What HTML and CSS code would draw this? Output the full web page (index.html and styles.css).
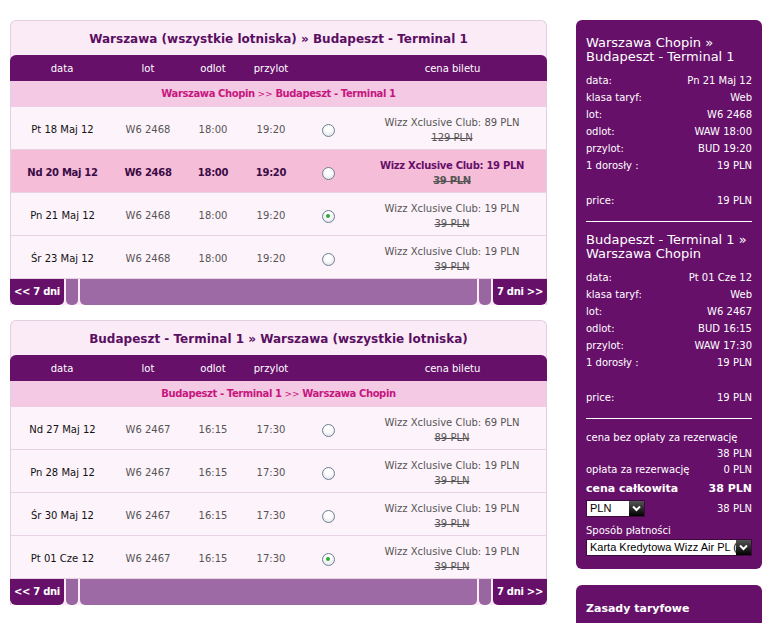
FILE: index.html
```html
<!DOCTYPE html>
<html lang="pl">
<head>
    <meta charset="UTF-8">
    <title>Wybór lotu</title>
    <link rel="stylesheet" href="styles.css">
</head>
<body>
<div class="page">
    <div class="main">
        <div class="flight-box">
            <h2 class="flight-title">Warszawa (wszystkie lotniska) &raquo; Budapeszt - Terminal 1</h2>
            <table class="flights">
                <thead>
                    <tr>
                        <th class="c-date">data</th>
                        <th class="c-lot">lot</th>
                        <th class="c-dep">odlot</th>
                        <th class="c-arr">przylot</th>
                        <th class="c-radio"></th>
                        <th class="c-price">cena biletu</th>
                    </tr>
                </thead>
                <tbody>
                    <tr class="route">
                        <td colspan="6"><b>Warszawa Chopin</b> <span class="arrows">&gt;&gt;</span> <b>Budapeszt - Terminal 1</b></td>
                    </tr>
                    <tr>
                        <td class="date">Pt 18 Maj 12</td>
                        <td>W6 2468</td>
                        <td>18:00</td>
                        <td>19:20</td>
                        <td><span class="radio"></span></td>
                        <td class="price">Wizz Xclusive Club: 89 PLN<br><s>129 PLN</s></td>
                    </tr>
                    <tr class="selected-day">
                        <td class="date">Nd 20 Maj 12</td>
                        <td>W6 2468</td>
                        <td>18:00</td>
                        <td>19:20</td>
                        <td><span class="radio"></span></td>
                        <td class="price">Wizz Xclusive Club: 19 PLN<br><s>39 PLN</s></td>
                    </tr>
                    <tr>
                        <td class="date">Pn 21 Maj 12</td>
                        <td>W6 2468</td>
                        <td>18:00</td>
                        <td>19:20</td>
                        <td><span class="radio checked"></span></td>
                        <td class="price">Wizz Xclusive Club: 19 PLN<br><s>39 PLN</s></td>
                    </tr>
                    <tr>
                        <td class="date">Śr 23 Maj 12</td>
                        <td>W6 2468</td>
                        <td>18:00</td>
                        <td>19:20</td>
                        <td><span class="radio"></span></td>
                        <td class="price">Wizz Xclusive Club: 19 PLN<br><s>39 PLN</s></td>
                    </tr>
                </tbody>
            </table>
            <div class="pager">
                <a class="pager-btn prev">&lt;&lt; 7 dni</a>
                <span class="pager-tab"></span>
                <span class="pager-fill"></span>
                <span class="pager-tab"></span>
                <a class="pager-btn next">7 dni &gt;&gt;</a>
            </div>
        </div>

        <div class="flight-box">
            <h2 class="flight-title">Budapeszt - Terminal 1 &raquo; Warszawa (wszystkie lotniska)</h2>
            <table class="flights">
                <thead>
                    <tr>
                        <th class="c-date">data</th>
                        <th class="c-lot">lot</th>
                        <th class="c-dep">odlot</th>
                        <th class="c-arr">przylot</th>
                        <th class="c-radio"></th>
                        <th class="c-price">cena biletu</th>
                    </tr>
                </thead>
                <tbody>
                    <tr class="route">
                        <td colspan="6"><b>Budapeszt - Terminal 1</b> <span class="arrows">&gt;&gt;</span> <b>Warszawa Chopin</b></td>
                    </tr>
                    <tr>
                        <td class="date">Nd 27 Maj 12</td>
                        <td>W6 2467</td>
                        <td>16:15</td>
                        <td>17:30</td>
                        <td><span class="radio"></span></td>
                        <td class="price">Wizz Xclusive Club: 69 PLN<br><s>89 PLN</s></td>
                    </tr>
                    <tr>
                        <td class="date">Pn 28 Maj 12</td>
                        <td>W6 2467</td>
                        <td>16:15</td>
                        <td>17:30</td>
                        <td><span class="radio"></span></td>
                        <td class="price">Wizz Xclusive Club: 19 PLN<br><s>39 PLN</s></td>
                    </tr>
                    <tr>
                        <td class="date">Śr 30 Maj 12</td>
                        <td>W6 2467</td>
                        <td>16:15</td>
                        <td>17:30</td>
                        <td><span class="radio"></span></td>
                        <td class="price">Wizz Xclusive Club: 19 PLN<br><s>39 PLN</s></td>
                    </tr>
                    <tr>
                        <td class="date">Pt 01 Cze 12</td>
                        <td>W6 2467</td>
                        <td>16:15</td>
                        <td>17:30</td>
                        <td><span class="radio checked"></span></td>
                        <td class="price">Wizz Xclusive Club: 19 PLN<br><s>39 PLN</s></td>
                    </tr>
                </tbody>
            </table>
            <div class="pager">
                <a class="pager-btn prev">&lt;&lt; 7 dni</a>
                <span class="pager-tab"></span>
                <span class="pager-fill"></span>
                <span class="pager-tab"></span>
                <a class="pager-btn next">7 dni &gt;&gt;</a>
            </div>
        </div>
    </div>

    <aside class="sidebar">
        <div class="summary">
            <div class="leg">
                <h3 class="leg-title">Warszawa Chopin &raquo;<br>Budapeszt - Terminal 1</h3>
                <div class="line"><span>data:</span><span>Pn 21 Maj 12</span></div>
                <div class="line"><span>klasa taryf:</span><span>Web</span></div>
                <div class="line"><span>lot:</span><span>W6 2468</span></div>
                <div class="line"><span>odlot:</span><span>WAW 18:00</span></div>
                <div class="line"><span>przylot:</span><span>BUD 19:20</span></div>
                <div class="line"><span>1 dorosły :</span><span>19 PLN</span></div>
                <div class="line price-line"><span>price:</span><span>19 PLN</span></div>
            </div>
            <div class="leg">
                <h3 class="leg-title">Budapeszt - Terminal 1 &raquo;<br>Warszawa Chopin</h3>
                <div class="line"><span>data:</span><span>Pt 01 Cze 12</span></div>
                <div class="line"><span>klasa taryf:</span><span>Web</span></div>
                <div class="line"><span>lot:</span><span>W6 2467</span></div>
                <div class="line"><span>odlot:</span><span>BUD 16:15</span></div>
                <div class="line"><span>przylot:</span><span>WAW 17:30</span></div>
                <div class="line"><span>1 dorosły :</span><span>19 PLN</span></div>
                <div class="line price-line"><span>price:</span><span>19 PLN</span></div>
            </div>
            <div class="totals">
                <div class="line"><span>cena bez opłaty za rezerwację</span></div>
                <div class="line right"><span>38 PLN</span></div>
                <div class="line"><span>opłata za rezerwację</span><span>0 PLN</span></div>
                <div class="line total"><span>cena całkowita</span><span>38 PLN</span></div>
                <div class="line currency">
                    <span class="fake-select small"><span class="sel-text">PLN</span><span class="sel-arrow"><svg width="9" height="7" viewBox="0 0 9 7"><path d="M1 1.5 L4.5 5 L8 1.5" fill="none" stroke="#fff" stroke-width="2"/></svg></span></span>
                    <span>38 PLN</span>
                </div>
                <div class="pay-label">Sposób płatności</div>
                <span class="fake-select wide"><span class="sel-text">Karta Kredytowa Wizz Air PL (</span><span class="sel-arrow"><svg width="9" height="7" viewBox="0 0 9 7"><path d="M1 1.5 L4.5 5 L8 1.5" fill="none" stroke="#fff" stroke-width="2"/></svg></span></span>
            </div>
        </div>
        <div class="rules">
            <h4>Zasady taryfowe</h4>
        </div>
    </aside>
</div>
</body>
</html>
```

FILE: styles.css
```css
body {
    margin: 0;
    padding: 20px 0 0 10px;
    background-color: #fff;
    font-family: "DejaVu Sans", Verdana, sans-serif;
    font-size: 10px;
    color: #222;
}
.page {
    display: flex;
    align-items: flex-start;
    gap: 29px;
}
.main {
    width: 537px;
}
.flight-box {
    background: #fbebf7;
    border: 1px solid #e3cfe0;
    border-radius: 6px 6px 0 0;
    border-bottom: none;
    margin-bottom: 15px;
}
.flight-title {
    margin: 0;
    height: 34px;
    line-height: 37px;
    text-align: center;
    font-size: 12px;
    font-weight: bold;
    color: #5a0f62;
}
.flights {
    width: 537px;
    margin-left: -1px;
    border-collapse: separate;
    border-spacing: 0;
    table-layout: fixed;
}
.flights th {
    background: #66106a;
    color: #fff;
    font-weight: normal;
    height: 26px;
    padding: 0;
    text-align: center;
}
.flights th:first-child {
    border-top-left-radius: 6px;
}
.flights th:last-child {
    border-top-right-radius: 6px;
}
.c-date { width: 104px; }
.c-lot { width: 68px; }
.c-dep { width: 62px; }
.c-arr { width: 54px; }
.c-radio { width: 60px; }
.flights td {
    height: 39px;
    padding: 3px 0 0;
    text-align: center;
    color: #555;
    background: #fdf3fb;
    border-bottom: 1px solid #e8d2e3;
    line-height: 15px;
}
.flights td:first-child {
    border-left: 1px solid #e3cfe0;
}
.flights td:last-child {
    border-right: 1px solid #e3cfe0;
}
.flights td.date {
    color: #111;
}
.flights .route td {
    height: 26px;
    padding: 0;
    background: #f4c9e4;
    color: #c6177f;
    border-bottom: none;
    letter-spacing: -0.4px;
}
.flights .route .arrows {
    font-size: 9px;
    letter-spacing: 0;
}
.flights .selected-day td {
    background: #f6bdd8;
    font-weight: bold;
    color: #3a0b45;
    letter-spacing: -0.3px;
}
.flights .selected-day td.price {
    color: #66106a;
}
.flights s {
    color: #555;
}
.radio {
    display: inline-block;
    width: 11px;
    height: 11px;
    border: 1px solid #6f7f95;
    border-radius: 50%;
    background: radial-gradient(circle at 50% 35%, #fff 30%, #d9dde3 100%);
    vertical-align: middle;
    position: relative;
}
.radio.checked::after {
    content: "";
    position: absolute;
    left: 3.5px;
    top: 3.5px;
    width: 4px;
    height: 4px;
    border-radius: 50%;
    background: #2eaa3a;
}
.pager {
    display: flex;
    height: 26px;
    margin: 0 -1px;
    gap: 2px;
}
.pager-btn {
    background: #66106a;
    color: #fff;
    font-weight: bold;
    line-height: 26px;
    width: 54px;
    text-align: center;
    letter-spacing: -0.3px;
}
.pager-btn.prev {
    border-bottom-left-radius: 6px;
    border-bottom-right-radius: 5px;
}
.pager-btn.next {
    border-bottom-right-radius: 6px;
    border-bottom-left-radius: 5px;
}
.pager-tab {
    width: 12px;
    background: #9a66a2;
    border-radius: 0 0 5px 5px;
}
.pager-fill {
    flex: 1;
    background: #9e6aa6;
    border-radius: 0 0 5px 5px;
}

.sidebar {
    width: 186px;
}
.summary {
    background: #66106a;
    color: #fff;
    border-radius: 6px;
    padding: 16px 10px 13px;
}
.leg {
    border-bottom: 1px solid #fff;
    padding-bottom: 12px;
    margin-bottom: 11px;
}
.leg-title {
    margin: 0 0 8px;
    font-size: 13px;
    font-weight: normal;
    line-height: 14px;
}
.line {
    display: flex;
    justify-content: space-between;
    line-height: 17px;
}
.line.right {
    justify-content: flex-end;
}
.price-line {
    margin-top: 18px;
}
.totals .line {
    line-height: 16px;
}
.totals .line.total {
    font-weight: bold;
    font-size: 11px;
    line-height: 22px;
}
.line.currency {
    align-items: center;
}
.fake-select {
    display: inline-flex;
    background: #fff;
    color: #000;
    height: 17px;
    border: 1px solid #3b0b3e;
    box-sizing: border-box;
}
.fake-select.small {
    width: 59px;
}
.fake-select.wide {
    width: 166px;
    margin-top: 1px;
}
.sel-text {
    flex: 1;
    padding-left: 3px;
    line-height: 15px;
    overflow: hidden;
    white-space: nowrap;
    font-family: "Liberation Sans", Arial, sans-serif;
    font-size: 11px;
}
.sel-arrow {
    width: 15px;
    background: linear-gradient(#555, #000);
    display: flex;
    align-items: center;
    justify-content: center;
}
.pay-label {
    margin-top: 6px;
    line-height: 15px;
}
.rules {
    margin-top: 16px;
    background: #66106a;
    border-radius: 6px;
    padding: 17px 10px 10px;
    height: 40px;
}
.rules h4 {
    margin: 0;
    color: #fff;
    font-size: 11px;
}
```
